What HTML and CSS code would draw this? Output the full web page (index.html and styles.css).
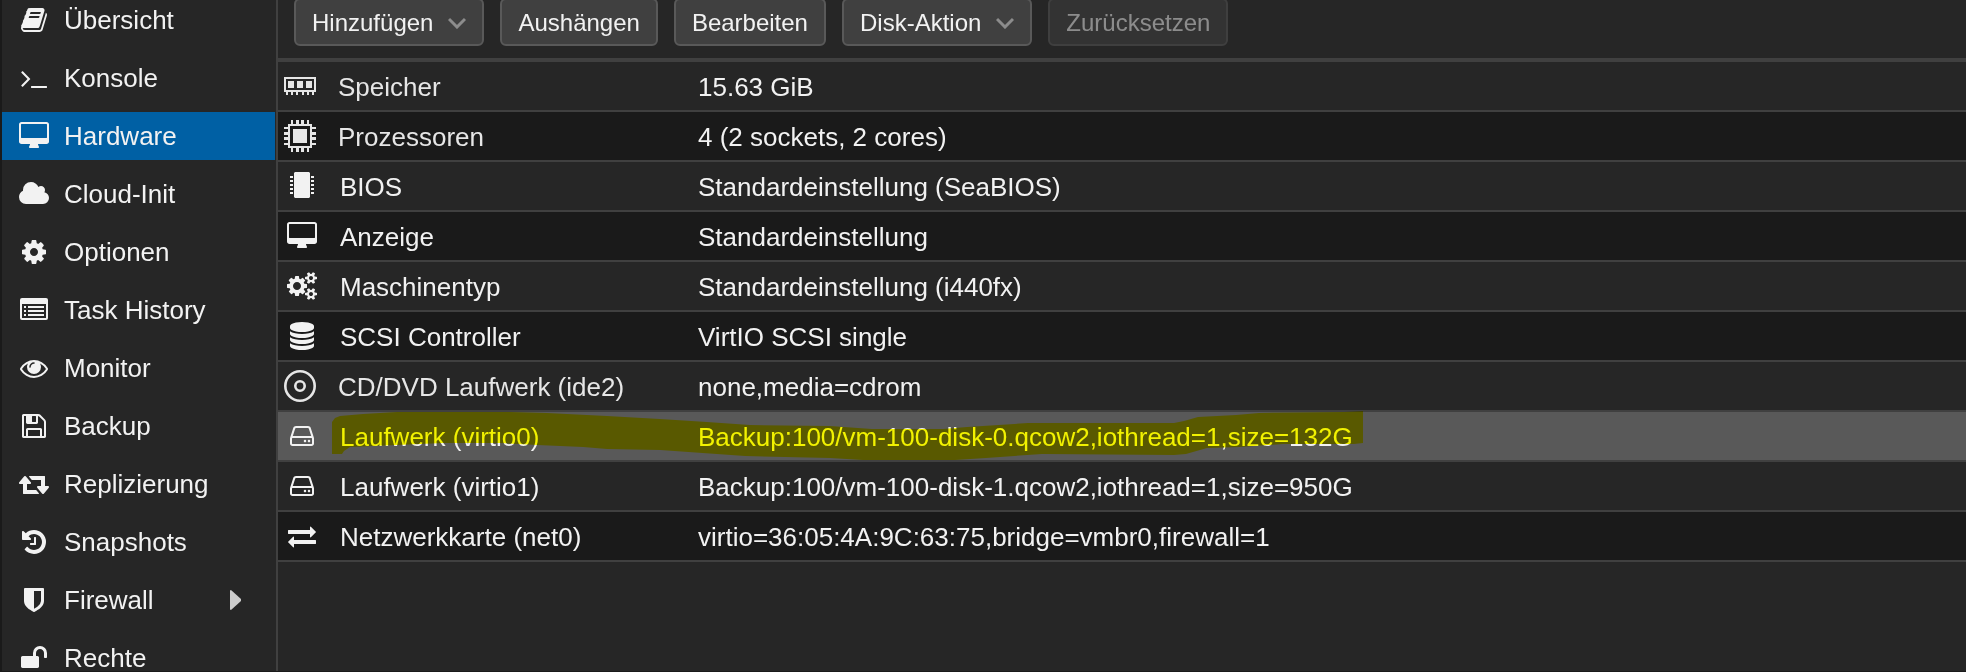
FILE: index.html
```html
<!DOCTYPE html>
<html lang="de">
<head>
    <meta charset="UTF-8">
    <meta name="viewport" content="width=device-width, initial-scale=1.0">
    <title>Hardware</title>
    <link rel="stylesheet" href="styles.css">
</head>
<body>
    <nav class="sidebar">
        <a class="nav-item" href="#">
            <svg class="icon" viewBox="-128 0 2048 1792"><path d="M1703 478q40 57 18 129l-275 906q-19 64-76.5 107.5t-122.5 43.5h-923q-77 0-148.5-53.5t-99.5-131.5q-24-67-2-127 0-4 3-27t4-37q1-8-3-21.5t-3-19.5q2-11 8-21t16.5-23.5 16.5-23.5q23-38 45-91.5t30-91.5q3-10 .5-30t-.5-28q3-11 17-28t17-23q21-36 42-92t25-90q1-9-2.5-32t.5-28q4-13 22-30.5t22-22.5q19-26 42.5-84.5t27.5-96.5q1-8-3-25.5t-2-26.5q2-8 9-18t18-23 17-21q8-12 16.5-30.5t15-35 16-36 19.5-32 26.5-23.5 36-11.5 47.5 5.5l-1 3q38-9 51-9h761q74 0 114 56t18 130l-274 906q-36 119-71.5 153.5t-128.5 34.5h-869q-27 0-38 15-11 16-1 43 24 70 144 70h923q29 0 56-15.5t35-41.5l300-987q7-22 5-57 38 15 59 43zm-1064 2q-4 13 2 22.5t20 9.5h608q13 0 25.5-9.5t16.5-22.5l21-64q4-13-2-22.5t-20-9.5h-608q-13 0-25.5 9.5t-16.5 22.5zm-83 256q-4 13 2 22.5t20 9.5h608q13 0 25.5-9.5t16.5-22.5l21-64q4-13-2-22.5t-20-9.5h-608q-13 0-25.5 9.5t-16.5 22.5z"/></svg>
            <span>Übersicht</span>
        </a>
        <a class="nav-item" href="#">
            <svg class="icon" viewBox="-128 0 2048 1792"><path d="M649 983l-466 466q-10 10-23 10t-23-10l-50-50q-10-10-10-23t10-23l393-393-393-393q-10-10-10-23t10-23l50-50q10-10 23-10t23 10l466 466q10 10 10 23t-10 23zm1079 457v64q0 14-9 23t-23 9h-960q-14 0-23-9t-9-23v-64q0-14 9-23t23-9h960q14 0 23 9t9 23z"/></svg>
            <span>Konsole</span>
        </a>
        <a class="nav-item active" href="#">
            <svg class="icon" viewBox="-128 0 2048 1792"><path d="M1728 992v-832q0-13-9.5-22.5t-22.5-9.5h-1600q-13 0-22.5 9.5t-9.5 22.5v832q0 13 9.5 22.5t22.5 9.5h1600q13 0 22.5-9.5t9.5-22.5zm128-832v1088q0 66-47 113t-113 47h-544q0 37 16 77.5t32 71 16 43.5q0 26-19 45t-45 19h-512q-26 0-45-19t-19-45q0-14 16-44t32-70 16-78h-544q-66 0-113-47t-47-113v-1088q0-66 47-113t113-47h1600q66 0 113 47t47 113z"/></svg>
            <span>Hardware</span>
        </a>
        <a class="nav-item" href="#">
            <svg class="icon" viewBox="0 0 2048 1792"><path d="M1984 1152q0 159-112.5 271.5t-271.5 112.5h-1088q-185 0-316.5-131.5t-131.5-316.5q0-132 71-241.5t187-163.5q-2-28-2-43 0-212 150-362t362-150q158 0 286.5 88t187.5 230q70-62 166-62 106 0 181 75t75 181q0 75-41 138 129 30 213 134.5t84 239.5z"/></svg>
            <span>Cloud-Init</span>
        </a>
        <a class="nav-item" href="#">
            <svg class="icon" viewBox="-128 0 2048 1792"><path d="M1152 896q0-106-75-181t-181-75-181 75-75 181 75 181 181 75 181-75 75-181zm512-109v222q0 12-8 23t-20 13l-185 28q-19 54-39 91 35 50 107 138 10 12 10 25t-9 23q-27 37-99 108t-94 71q-12 0-26-9l-138-108q-44 23-91 38-16 136-29 186-7 28-36 28h-222q-14 0-24.5-8.5t-11.5-21.5l-28-184q-49-16-90-37l-141 107q-10 9-25 9-14 0-25-11-126-114-165-168-7-10-7-23 0-12 8-23 15-21 51-66.5t54-70.5q-27-50-41-99l-183-27q-13-2-21-12.5t-8-23.5v-222q0-12 8-23t19-13l186-28q14-46 39-92-40-57-107-138-10-12-10-24 0-10 9-23 26-36 98.5-107.5t94.5-71.5q13 0 26 10l138 107q44-23 91-38 16-136 29-186 7-28 36-28h222q14 0 24.5 8.5t11.5 21.5l28 184q49 16 90 37l142-107q9-9 24-9 13 0 25 10 129 119 165 170 7 8 7 22 0 12-8 23-15 21-51 66.5t-54 70.5q26 50 41 98l183 28q13 2 21 12.5t8 23.5z"/></svg>
            <span>Optionen</span>
        </a>
        <a class="nav-item" href="#">
            <svg class="icon" viewBox="0 0 32 28"><path fill-rule="evenodd" d="M4 2h24a2 2 0 0 1 2 2v18a2 2 0 0 1-2 2H4a2 2 0 0 1-2-2V4a2 2 0 0 1 2-2zM4 8v14h24V8zM6 10h2v2H6zM6 14h2v2H6zM6 18h2v2H6zM10 10h16v2H10zM10 14h16v2H10zM10 18h16v2H10z"/></svg>
            <span>Task History</span>
        </a>
        <a class="nav-item" href="#">
            <svg class="icon" viewBox="-128 0 2048 1792"><path d="M1664 960q-152-236-381-353 61 104 61 225 0 185-131.5 316.5t-316.5 131.5-316.5-131.5-131.5-316.5q0-121 61-225-229 117-381 353 133 205 333.5 326.5t434.5 121.5 434.5-121.5 333.5-326.5zm-720-384q0-20-14-34t-34-14q-125 0-214.5 89.5t-89.5 214.5q0 20 14 34t34 14 34-14 14-34q0-86 61-147t147-61q20 0 34-14t14-34zm848 384q0 34-20 69-140 230-376.5 368.5t-499.5 138.5-499.5-139-376.5-368q-20-35-20-69t20-69q140-229 376.5-368t499.5-139 499.5 139 376.5 368q20 35 20 69z"/></svg>
            <span>Monitor</span>
        </a>
        <a class="nav-item" href="#">
            <svg class="icon" viewBox="-128 0 2048 1792"><path d="M512 1536h768v-384h-768v384zm896 0h128v-896q0-14-10-38.5t-20-34.5l-281-281q-10-10-34-20t-39-10v416q0 40-28 68t-68 28h-576q-40 0-68-28t-28-68v-416h-128v1280h128v-416q0-40 28-68t68-28h832q40 0 68 28t28 68v416zm-384-928v-320q0-13-9.5-22.5t-22.5-9.5h-192q-13 0-22.5 9.5t-9.5 22.5v320q0 13 9.5 22.5t22.5 9.5h192q13 0 22.5-9.5t9.5-22.5zm640 32v928q0 40-28 68t-68 28h-1344q-40 0-68-28t-28-68v-1344q0-40 28-68t68-28h928q40 0 88 20t76 48l280 280q28 28 48 76t20 88z"/></svg>
            <span>Backup</span>
        </a>
        <a class="nav-item" href="#">
            <svg class="icon" viewBox="-64 0 2048 1792"><path d="M1280 1504q0 13-9.5 22.5t-22.5 9.5h-960q-8 0-13.5-2t-9-7-5.5-8-3-11.5-1-11.5v-600h-192q-26 0-45-19t-19-45q0-24 15-41l320-384q19-22 49-22t49 22l320 384q15 17 15 41 0 26-19 45t-45 19h-192v384h576q16 0 25 11l160 192q7 10 7 21zm640-416q0 24-15 41l-320 384q-20 23-49 23t-49-23l-320-384q-15-17-15-41 0-26 19-45t45-19h192v-384h-576q-16 0-25-12l-160-192q-7-9-7-20 0-13 9.5-22.5t22.5-9.5h960q8 0 13.5 2t9 7 5.5 8 3 11.5 1 11.5v600h192q26 0 45 19t19 45z"/></svg>
            <span>Replizierung</span>
        </a>
        <a class="nav-item" href="#">
            <svg class="icon" viewBox="-128 0 2048 1792"><path d="M1664 896q0 156-61 298t-164 245-245 164-298 61q-172 0-327-72.5t-264-204.5q-7-10-6.5-22.5t8.5-20.5l137-138q10-9 25-9 16 2 23 12 73 95 179 147t225 52q104 0 198.5-40.5t163.5-109.5 109.5-163.5 40.5-198.5-40.5-198.5-109.5-163.5-163.5-109.5-198.5-40.5q-98 0-188 35.5t-160 101.5l137 138q31 30 14 69-17 40-59 40h-448q-26 0-45-19t-19-45v-448q0-42 40-59 39-17 69 14l130 129q107-101 244.5-156.5t284.5-55.5q156 0 298 61t245 164 164 245 61 298zm-640-288v448q0 14-9 23t-23 9h-320q-14 0-23-9t-9-23v-64q0-14 9-23t23-9h224v-352q0-14 9-23t23-9h64q14 0 23 9t9 23z"/></svg>
            <span>Snapshots</span>
        </a>
        <a class="nav-item" href="#">
            <svg class="icon" viewBox="-128 0 2048 1792"><path d="M1344 960v-640h-448v1137q119-63 213-137 235-184 235-360zm192-768v768q0 86-33.5 170.5t-83 150-118 127.5-126.5 103-121 77.5-89.5 49.5-42.5 20q-12 6-26 6t-26-6q-16-7-42.5-20t-89.5-49.5-121-77.5-126.5-103-118-127.5-83-150-33.5-170.5v-768q0-26 19-45t45-19h1152q26 0 45 19t19 45z"/></svg>
            <span>Firewall</span>
            <svg class="expander" viewBox="0 0 11 20"><path d="M0 1q0-1 1-1L11 9v2L1 20q-1 0-1-1z"/></svg>
        </a>
        <a class="nav-item" href="#">
            <svg class="icon" viewBox="-128 0 2048 1792"><path d="M1728 576v256q0 26-19 45t-45 19h-64q-26 0-45-19t-19-45v-256q0-106-75-181t-181-75-181 75-75 181v192h96q40 0 68 28t28 68v576q0 40-28 68t-68 28h-960q-40 0-68-28t-28-68v-576q0-40 28-68t68-28h672v-192q0-185 131.5-316.5t316.5-131.5 316.5 131.5 131.5 316.5z"/></svg>
            <span>Rechte</span>
        </a>
    </nav>

    <main class="content">
        <div class="toolbar">
            <button class="button" type="button">Hinzufügen<svg class="chevron" viewBox="0 0 18 12"><path d="M1 2l8 8 8-8"/></svg></button>
            <button class="button" type="button">Aushängen</button>
            <button class="button" type="button">Bearbeiten</button>
            <button class="button" type="button">Disk-Aktion<svg class="chevron" viewBox="0 0 18 12"><path d="M1 2l8 8 8-8"/></svg></button>
            <button class="button" type="button" disabled>Zurücksetzen</button>
        </div>

        <table class="hardware">
            <tbody>
                <tr>
                    <td class="name muted"><div class="cell">
                        <svg class="icon-large" viewBox="0 0 32 32"><path fill-rule="evenodd" d="M0 7h32v15H0zM2 9v11h28V9zM4 11h6v7H4zM13 11h6v7h-6zM22 11h6v7h-6zM2 22h2v3H2zM7 22h2v3H7zM12 22h2v3h-2zM18 22h2v3h-2zM23 22h2v3h-2zM28 22h2v3h-2z"/></svg>
                        <span>Speicher</span>
                    </div></td>
                    <td>15.63 GiB</td>
                </tr>
                <tr>
                    <td class="name muted"><div class="cell">
                        <svg class="icon-large" viewBox="0 0 32 32"><path fill-rule="evenodd" d="M4 4h24v24H4zM6 6v20h20V6zM9 9h14v14H9zM7 0h2v4H7zM12 0h3v4h-3zM17 0h3v4h-3zM23 0h2v4h-2zM7 28h2v4H7zM12 28h3v4h-3zM17 28h3v4h-3zM23 28h2v4h-2zM0 7h4v2H0zM0 12h4v3H0zM0 17h4v3H0zM0 23h4v2H0zM28 7h4v2h-4zM28 12h4v3h-4zM28 17h4v3h-4zM28 23h4v2h-4z"/></svg>
                        <span>Prozessoren</span>
                    </div></td>
                    <td>4 (2 sockets, 2 cores)</td>
                </tr>
                <tr>
                    <td class="name"><div class="cell">
                        <svg class="icon" viewBox="0 0 32 28"><path d="M9 0h14l1 1v24l-1 1H9l-1-1V1zM4 4h3v2H4zM4 8h3v2H4zM4 12h3v2H4zM4 16h3v2H4zM4 20h3v2H4zM25 4h3v2h-3zM25 8h3v2h-3zM25 12h3v2h-3zM25 16h3v2h-3zM25 20h3v2h-3z"/></svg>
                        <span>BIOS</span>
                    </div></td>
                    <td>Standardeinstellung (SeaBIOS)</td>
                </tr>
                <tr>
                    <td class="name"><div class="cell">
                        <svg class="icon" viewBox="-128 0 2048 1792"><path d="M1728 992v-832q0-13-9.5-22.5t-22.5-9.5h-1600q-13 0-22.5 9.5t-9.5 22.5v832q0 13 9.5 22.5t22.5 9.5h1600q13 0 22.5-9.5t9.5-22.5zm128-832v1088q0 66-47 113t-113 47h-544q0 37 16 77.5t32 71 16 43.5q0 26-19 45t-45 19h-512q-26 0-45-19t-19-45q0-14 16-44t32-70 16-78h-544q-66 0-113-47t-47-113v-1088q0-66 47-113t113-47h1600q66 0 113 47t47 113z"/></svg>
                        <span>Anzeige</span>
                    </div></td>
                    <td>Standardeinstellung</td>
                </tr>
                <tr>
                    <td class="name"><div class="cell">
                        <svg class="icon" viewBox="-128 0 2048 1792"><path d="M832 896q0-106-75-181t-181-75-181 75-75 181 75 181 181 75 181-75 75-181zm768 512q0-52-38-90t-90-38-90 38-38 90q0 53 37.5 90.5t90.5 37.5 90.5-37.5 37.5-90.5zm0-1024q0-52-38-90t-90-38-90 38-38 90q0 53 37.5 90.5t90.5 37.5 90.5-37.5 37.5-90.5zm-384 421v185q0 10-7 19.5t-16 10.5l-155 24q-11 35-32 76 34 48 90 115 7 11 7 20 0 12-7 19-23 30-82.5 89.5t-78.5 59.5q-11 0-21-7l-115-90q-37 19-77 31-11 108-23 155-7 24-30 24h-186q-11 0-20-7.5t-10-17.5l-23-153q-34-10-75-31l-118 89q-7 7-20 7-11 0-21-8-144-133-144-160 0-9 7-19 10-14 41-53t47-61q-23-44-35-82l-152-24q-10-1-17-9.5t-7-19.5v-185q0-10 7-19.5t16-10.5l155-24q11-35 32-76-34-48-90-115-7-11-7-20 0-12 7-20 22-30 82-89t79-59q11 0 21 7l115 90q34-18 77-32 11-108 23-154 7-24 30-24h186q11 0 20 7.5t10 17.5l23 153q34 10 75 31l118-89q8-7 20-7 11 0 21 8 144 133 144 160 0 8-7 19-12 16-42 54t-45 60q23 48 34 82l152 23q10 2 17 10.5t7 19.5zm640 533v140q0 16-149 31-12 27-30 52 51 113 51 138 0 4-4 7-122 71-124 71-8 0-46-47t-52-68q-20 2-30 2t-30-2q-14 21-52 68t-46 47q-2 0-124-71-4-3-4-7 0-25 51-138-18-25-30-52-149-15-149-31v-140q0-16 149-31 13-29 30-52-51-113-51-138 0-4 4-7 4-2 35-20t59-34 30-16q8 0 46 46.5t52 67.5q20-2 30-2t30 2q51-71 92-112l6-2q4 0 124 70 4 3 4 7 0 25-51 138 17 23 30 52 149 15 149 31zm0-1024v140q0 16-149 31-12 27-30 52 51 113 51 138 0 4-4 7-122 71-124 71-8 0-46-47t-52-68q-20 2-30 2t-30-2q-14 21-52 68t-46 47q-2 0-124-71-4-3-4-7 0-25 51-138-18-25-30-52-149-15-149-31v-140q0-16 149-31 13-29 30-52-51-113-51-138 0-4 4-7 4-2 35-20t59-34 30-16q8 0 46 46.5t52 67.5q20-2 30-2t30 2q51-71 92-112l6-2q4 0 124 70 4 3 4 7 0 25-51 138 17 23 30 52 149 15 149 31z"/></svg>
                        <span>Maschinentyp</span>
                    </div></td>
                    <td>Standardeinstellung (i440fx)</td>
                </tr>
                <tr>
                    <td class="name"><div class="cell">
                        <svg class="icon" viewBox="-128 0 2048 1792"><path d="M896 768q237 0 443-43t325-127v170q0 69-103 128t-280 93.5-385 34.5-385-34.5-280-93.5-103-128v-170q119 84 325 127t443 43zm0 768q237 0 443-43t325-127v170q0 69-103 128t-280 93.5-385 34.5-385-34.5-280-93.5-103-128v-170q119 84 325 127t443 43zm0-384q237 0 443-43t325-127v170q0 69-103 128t-280 93.5-385 34.5-385-34.5-280-93.5-103-128v-170q119 84 325 127t443 43zm0-1152q208 0 385 34.5t280 93.5 103 128v128q0 69-103 128t-280 93.5-385 34.5-385-34.5-280-93.5-103-128v-128q0-69 103-128t280-93.5 385-34.5z"/></svg>
                        <span>SCSI Controller</span>
                    </div></td>
                    <td>VirtIO SCSI single</td>
                </tr>
                <tr>
                    <td class="name muted"><div class="cell">
                        <svg class="icon-large" viewBox="0 0 32 32"><path fill-rule="evenodd" d="M16 0a16 16 0 1 1 0 32 16 16 0 0 1 0-32zM16 2.600a13.400 13.400 0 1 0 0 26.800 13.400 13.400 0 0 0 0-26.800zM16 10a6 6 0 1 1 0 12 6 6 0 0 1 0-12zM16 12.600a3.400 3.400 0 1 0 0 6.800 3.400 3.400 0 0 0 0-6.800z"/></svg>
                        <span>CD/DVD Laufwerk (ide2)</span>
                    </div></td>
                    <td>none,media=cdrom</td>
                </tr>
                <tr class="selected">
                    <td class="name"><div class="cell">
                        <svg class="icon" viewBox="-128 0 2048 1792"><path d="M1168 1216q0 33-23.5 56.5t-56.5 23.5-56.5-23.5-23.5-56.5 23.5-56.5 56.5-23.5 56.5 23.5 23.5 56.5zm256 0q0 33-23.5 56.5t-56.5 23.5-56.5-23.5-23.5-56.5 23.5-56.5 56.5-23.5 56.5 23.5 23.5 56.5zm112 160v-320q0-13-9.5-22.5t-22.5-9.5h-1216q-13 0-22.5 9.5t-9.5 22.5v320q0 13 9.5 22.5t22.5 9.5h1216q13 0 22.5-9.5t9.5-22.5zm-1230-480h1180l-157-482q-4-13-16-21.5t-26-8.5h-782q-14 0-26 8.5t-16 21.5zm1358 160v320q0 66-47 113t-113 47h-1216q-66 0-113-47t-47-113v-320q0-25 16-75l197-606q17-53 63-86t101-33h782q55 0 101 33t63 86l197 606q16 50 16 75z"/></svg>
                        <span>Laufwerk (virtio0)</span>
                    </div></td>
                    <td>
                        Backup:100/vm-100-disk-0.qcow2,iothread=1,size=132G
                        <!-- text marker stroke -->
                        <svg class="marker" viewBox="332 411 1031 50"><path d="M332 422L335 418 340 416 363 414 397 412H510L547 413 607 416 660 419 707 422 750 425 830 426 872 429H943L967 427 1028 423H1174L1184 421 1198 417 1236 415 1259 413 1344 412 1363 411V443L1354 444H1283L1240 447 1207 448 1186 454 1174 455 1042 454 986 458 955 460H863L830 458 745 456 660 450 607 449 583 447 537 445 500 443H443L397 445 350 447 344 451 342 454H332z"/></svg>
                    </td>
                </tr>
                <tr>
                    <td class="name"><div class="cell">
                        <svg class="icon" viewBox="-128 0 2048 1792"><path d="M1168 1216q0 33-23.5 56.5t-56.5 23.5-56.5-23.5-23.5-56.5 23.5-56.5 56.5-23.5 56.5 23.5 23.5 56.5zm256 0q0 33-23.5 56.5t-56.5 23.5-56.5-23.5-23.5-56.5 23.5-56.5 56.5-23.5 56.5 23.5 23.5 56.5zm112 160v-320q0-13-9.5-22.5t-22.5-9.5h-1216q-13 0-22.5 9.5t-9.5 22.5v320q0 13 9.5 22.5t22.5 9.5h1216q13 0 22.5-9.5t9.5-22.5zm-1230-480h1180l-157-482q-4-13-16-21.5t-26-8.5h-782q-14 0-26 8.5t-16 21.5zm1358 160v320q0 66-47 113t-113 47h-1216q-66 0-113-47t-47-113v-320q0-25 16-75l197-606q17-53 63-86t101-33h782q55 0 101 33t63 86l197 606q16 50 16 75z"/></svg>
                        <span>Laufwerk (virtio1)</span>
                    </div></td>
                    <td>Backup:100/vm-100-disk-1.qcow2,iothread=1,size=950G</td>
                </tr>
                <tr>
                    <td class="name"><div class="cell">
                        <svg class="icon" viewBox="-128 0 2048 1792"><path d="M1792 1184v192q0 13-9.5 22.5t-22.5 9.5h-1376v192q0 13-9.5 22.5t-22.5 9.5q-12 0-24-10l-319-320q-9-9-9-22 0-14 9-23l320-320q9-9 23-9 13 0 22.5 9.5t9.5 22.5v192h1376q13 0 22.5 9.5t9.5 22.5zm0-544q0 14-9 23l-320 320q-9 9-23 9-13 0-22.5-9.5t-9.5-22.5v-192h-1376q-13 0-22.5-9.5t-9.5-22.5v-192q0-13 9.5-22.5t22.5-9.5h1376v-192q0-14 9-23t23-9q12 0 24 10l319 319q9 9 9 23z"/></svg>
                        <span>Netzwerkkarte (net0)</span>
                    </div></td>
                    <td>virtio=36:05:4A:9C:63:75,bridge=vmbr0,firewall=1</td>
                </tr>
            </tbody>
        </table>
    </main>
</body>
</html>
```
FILE: styles.css
```css
* {
    box-sizing: border-box;
}
body {
    display: flex;
    height: 100vh;
    margin: 0;
    overflow: hidden;
    border-bottom: 1px solid #1a1a1a;
    background-color: #262626;
    color: #f2f2f2;
    font-family: "Liberation Sans", Arial, sans-serif;
    font-size: 26px;
    line-height: 30px;
}
svg {
    flex: none;
    fill: currentColor;
}
.sidebar {
    flex: none;
    display: flex;
    flex-direction: column;
    gap: 10px;
    width: 278px;
    margin-top: -4px;
    padding-right: 1px;
    border-left: 2px solid #1a1a1a;
    border-right: 2px solid #404040;
}
.nav-item {
    flex: none;
    display: flex;
    align-items: center;
    gap: 14px;
    height: 48px;
    padding: 0 34px 0 16px;
    color: #f2f2f2;
    text-decoration: none;
}
.nav-item.active {
    background-color: #0060a4;
}
.icon {
    width: 32px;
    height: 28px;
}
.icon-large {
    width: 32px;
    height: 32px;
}
.expander {
    width: 11px;
    height: 20px;
    margin-left: auto;
    color: #cccccc;
}
.content {
    flex: 1;
    min-width: 0;
    margin-top: -2px;
}
.toolbar {
    display: flex;
    gap: 16px;
    padding: 0 16px 12px;
    border-bottom: 4px solid #404040;
}
.button {
    display: flex;
    align-items: center;
    height: 48px;
    padding: 2px 16px 0;
    border: 2px solid #595959;
    border-radius: 6px;
    background-color: #404040;
    color: #f2f2f2;
    font-family: inherit;
    font-size: 24px;
    line-height: 28px;
}
.button:disabled {
    opacity: 0.5;
}
.chevron {
    width: 18px;
    height: 12px;
    margin-left: 15px;
    fill: none;
    stroke: #8c8c8c;
    stroke-width: 3px;
}
.hardware {
    width: 100%;
    border-spacing: 0;
}
.hardware tr {
    position: relative;
    height: 50px;
}
.hardware tr:nth-child(even) {
    background-color: #1a1a1a;
}
.hardware tr.selected {
    background-color: #595959;
}
.hardware td {
    padding: 2px 6px 0;
    border-bottom: 2px solid #404040;
    white-space: nowrap;
}
.hardware .name {
    width: 414px;
    padding-top: 0;
}
.muted {
    color: #e6e6e6;
}
.cell {
    display: flex;
    align-items: center;
    gap: 22px;
}
.cell span {
    padding-top: 2px;
}
.cell .icon {
    margin-left: 2px;
}
.marker {
    position: absolute;
    top: -1px;
    left: 54px;
    width: 1031px;
    height: 50px;
    fill: #ffff00;
    mix-blend-mode: multiply;
    pointer-events: none;
}
```
